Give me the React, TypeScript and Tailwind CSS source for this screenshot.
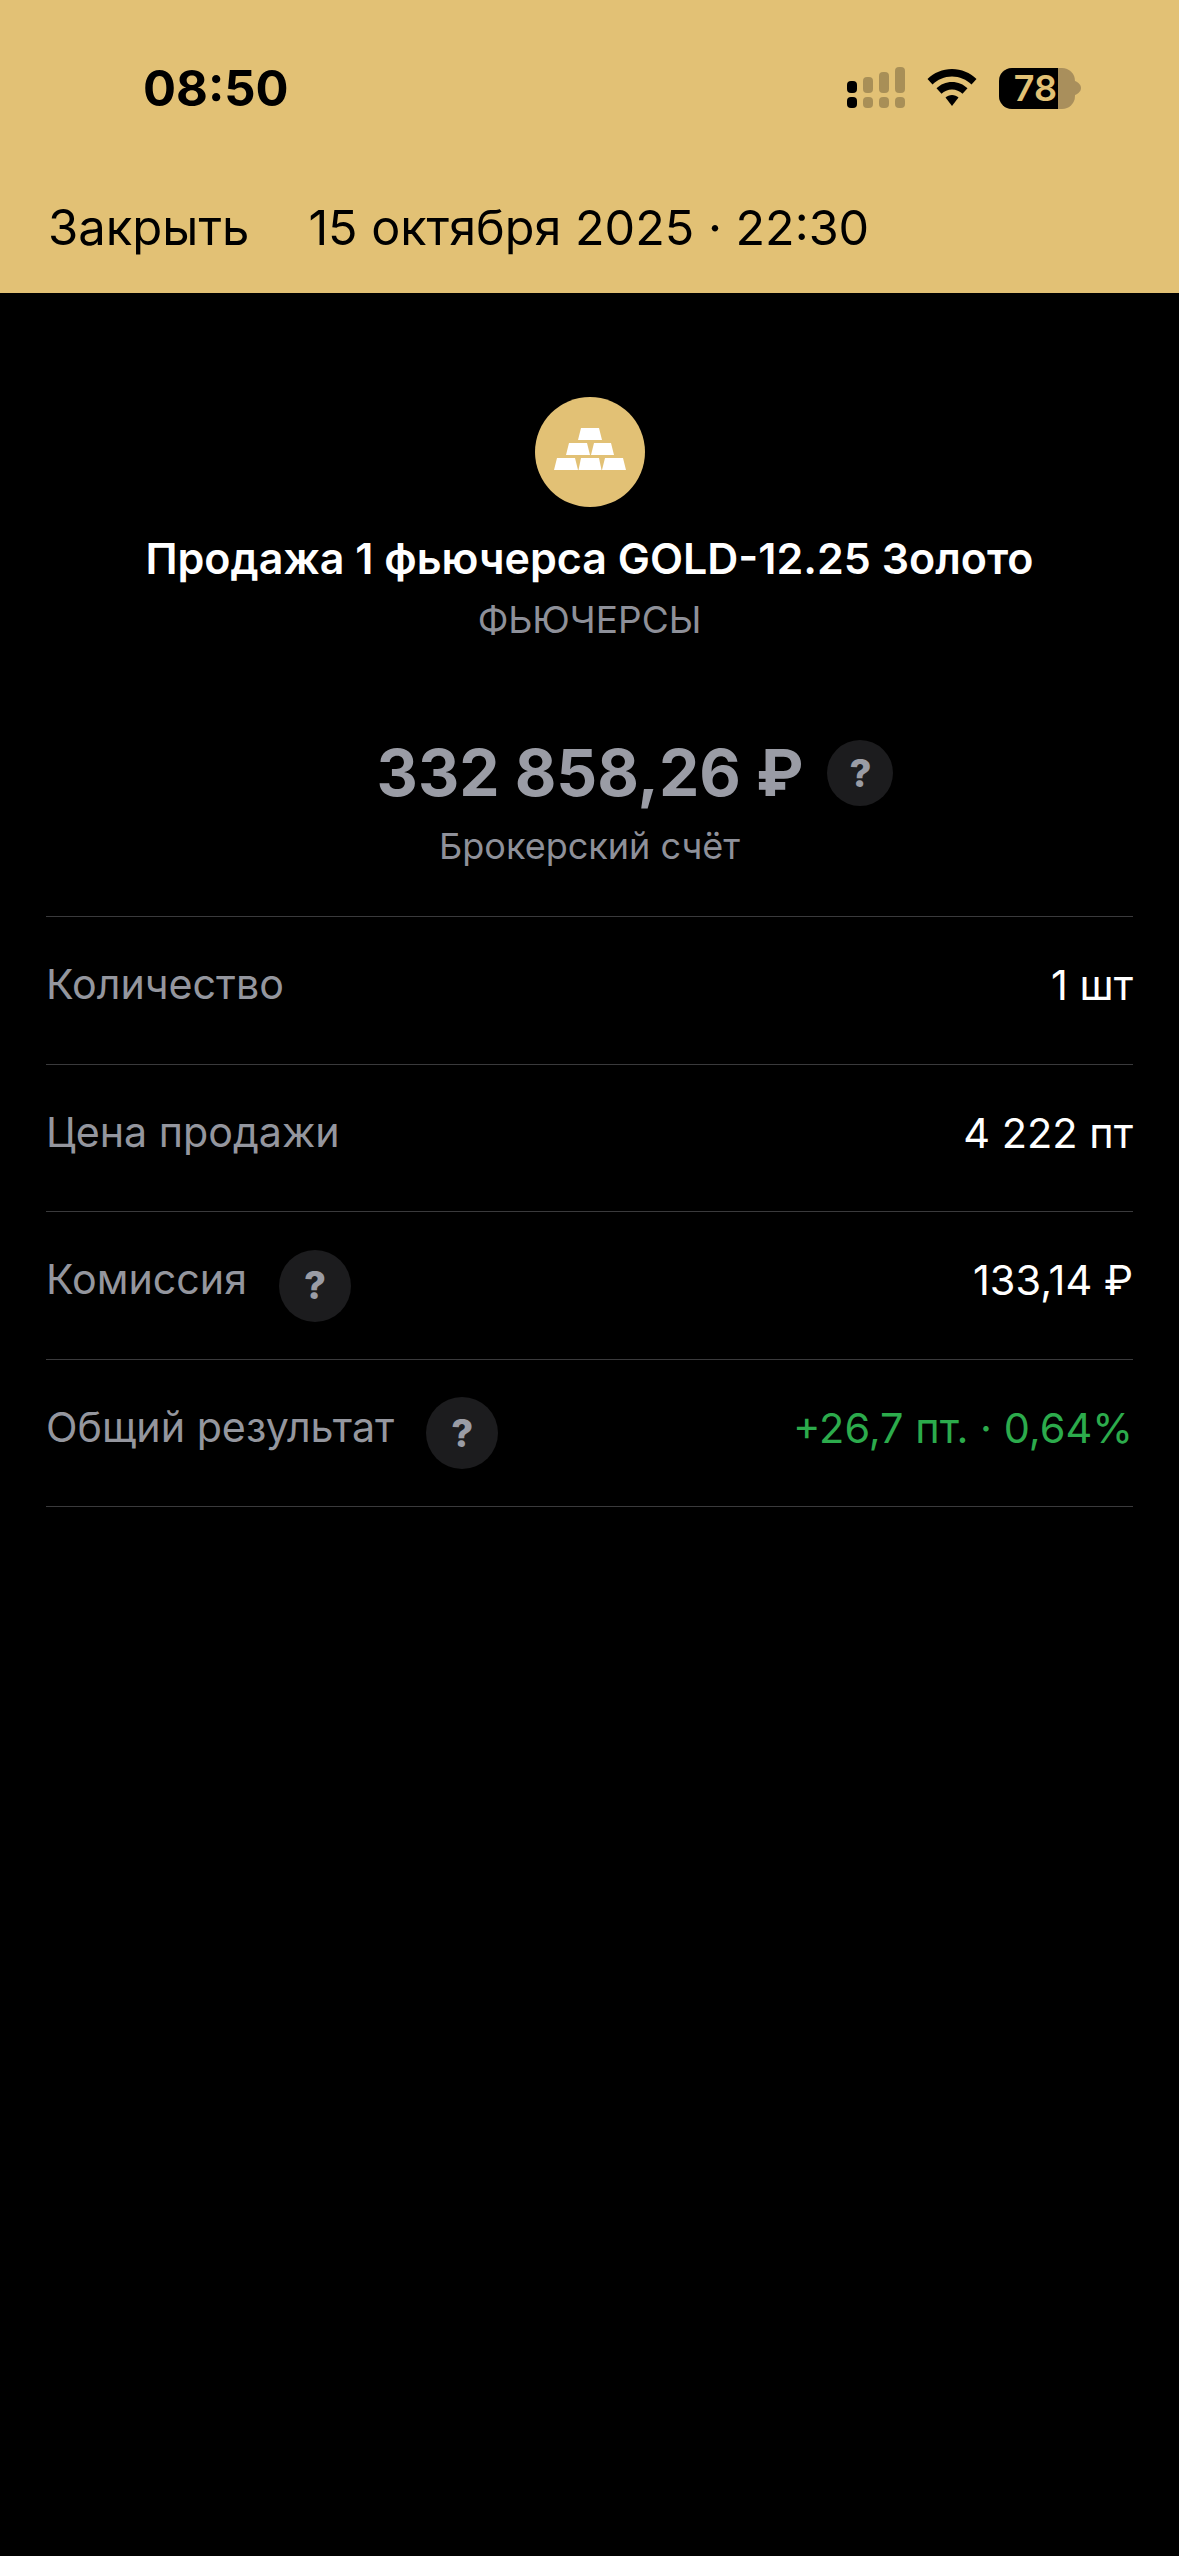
import React from "react";

function HelpDot({ size = "big" }: { size?: "big" | "small" }) {
  return (
    <span
      className={
        size === "big"
          ? "flex size-[66px] items-center justify-center rounded-full bg-[#1c1c1e] text-[38px] font-extrabold text-[#9a9ca5]"
          : "flex size-[72px] items-center justify-center rounded-full bg-[#1c1c1e] text-[38px] font-extrabold text-[#9a9ca5]"
      }
    >
      ?
    </span>
  );
}

function Signal() {
  return (
    <svg width="58" height="42" viewBox="0 0 58 42">
      <rect x="0" y="14" width="10" height="12" rx="4" fill="#000" />
      <rect x="0" y="30" width="10" height="11" rx="4" fill="#000" />
      <g fill="#000" opacity="0.25">
        <rect x="16" y="10" width="10" height="16" rx="4" />
        <rect x="16" y="30" width="10" height="11" rx="4" />
        <rect x="32" y="5" width="10" height="21" rx="4" />
        <rect x="32" y="30" width="10" height="11" rx="4" />
        <rect x="48" y="0" width="10" height="26" rx="4" />
        <rect x="48" y="30" width="10" height="11" rx="4" />
      </g>
    </svg>
  );
}

function Wifi() {
  return (
    <svg width="50" height="38" viewBox="0 0 50 38">
      <path d="M25 0C15.500 0 7 3.800 0.500 10L5.500 15.500C10.500 10.500 17.500 7.500 25 7.500C32.500 7.500 39.500 10.500 44.500 15.500L49.500 10C43 3.800 34.500 0 25 0Z" fill="#000" />
      <path d="M25 13C19 13 13.500 15.400 9.500 19.300L14.500 24.800C17.200 22.200 21 20.500 25 20.500C29 20.500 32.800 22.200 35.500 24.800L40.500 19.300C36.500 15.400 31 13 25 13Z" fill="#000" />
      <path d="M25 26C22.500 26 20.200 27 18.500 28.600L25 37L31.500 28.600C29.800 27 27.500 26 25 26Z" fill="#000" />
    </svg>
  );
}

function Battery() {
  return (
    <div className="flex items-center">
      <div className="flex h-[41px] w-[76px] overflow-hidden rounded-[13px] bg-[#a98f5c]">
        <div className="flex w-[59px] items-center justify-end bg-black pr-[1px] text-[36px] font-semibold leading-none text-[#e2c175]">
          78
        </div>
      </div>
      <svg width="6" height="14" viewBox="0 0 6 14">
        <path d="M0 0C3.500 1.500 6 4 6 7C6 10 3.500 12.500 0 14Z" fill="#a98f5c" />
      </svg>
    </div>
  );
}

function GoldBars() {
  return (
    <svg width="72" height="42" viewBox="0 0 72 42" fill="#fff" className="mb-[6px]">
      <polygon points="27,0 45,0 48,12 24,12" />
      <polygon points="15,15 33,15 36,27 12,27" />
      <polygon points="40,15 57,15 60,27 37,27" />
      <polygon points="3,30 21,30 24,42 0,42" />
      <polygon points="27,30 45,30 47.500,42 24.500,42" />
      <polygon points="51,30 69,30 72,42 48,42" />
    </svg>
  );
}

const rows: { label: string; value: string; help?: boolean; green?: boolean }[] = [
  { label: "Количество", value: "1 шт" },
  { label: "Цена продажи", value: "4 222 пт" },
  { label: "Комиссия", value: "133,14 ₽", help: true },
  { label: "Общий результат", value: "+26,7 пт. · 0,64%", help: true, green: true },
];

export default function App() {
  return (
    <div className="min-h-[2556px] w-[1179px] bg-black font-['Inter',sans-serif]">
      <header className="h-[293px] bg-[#e2c175] text-black">
        <div className="flex h-[176px] items-center justify-between pl-[143px] pr-[98px]">
          <span className="text-[49px] font-bold leading-none">08:50</span>
          <div className="flex items-center gap-[22px]">
            <Signal />
            <Wifi />
            <Battery />
          </div>
        </div>
        <div className="mt-[22px] flex items-center pl-[48px] text-[49px] leading-[60px]">
          <span>Закрыть</span>
          <span className="ml-[59px] text-[48.500px]">15 октября 2025 · 22:30</span>
        </div>
      </header>

      <section className="flex flex-col items-center pt-[104px]">
        <div className="flex size-[110px] items-center justify-center rounded-full bg-[#e2c175]">
          <GoldBars />
        </div>
        <h1 className="mt-[26px] text-[43px] font-semibold leading-[50px] text-white">
          Продажа 1 фьючерса GOLD-12.25 Золото
        </h1>
        <p className="mt-[12px] text-[37px] leading-[50px] text-[#8e9099]">ФЬЮЧЕРСЫ</p>
        <div className="mt-[92px] flex items-center gap-[24px] pl-[91px]">
          <span className="text-[64px] font-bold leading-[72px] text-[#9a9ca5]">332 858,26 ₽</span>
          <HelpDot />
        </div>
        <p className="mt-[12px] text-[36px] leading-[50px] text-[#8e9099]">Брокерский счёт</p>
      </section>

      <section className="mx-[46px] mt-[45px] border-t border-[#3a3a3c]">
        {rows.map((row) => (
          <div
            key={row.label}
            className="flex h-[147.500px] items-center justify-between border-b border-[#3a3a3c] pb-[10px] text-[41.500px]"
          >
            <div className="flex items-center gap-[32px]">
              <span className="text-[41.200px] text-[#94969e]">{row.label}</span>
              {row.help && (
                <span className="mt-[11px]">
                  <HelpDot size="small" />
                </span>
              )}
            </div>
            <span className={row.green ? "text-[#2cab4c]" : "text-white"}>{row.value}</span>
          </div>
        ))}
      </section>
    </div>
  );
}
